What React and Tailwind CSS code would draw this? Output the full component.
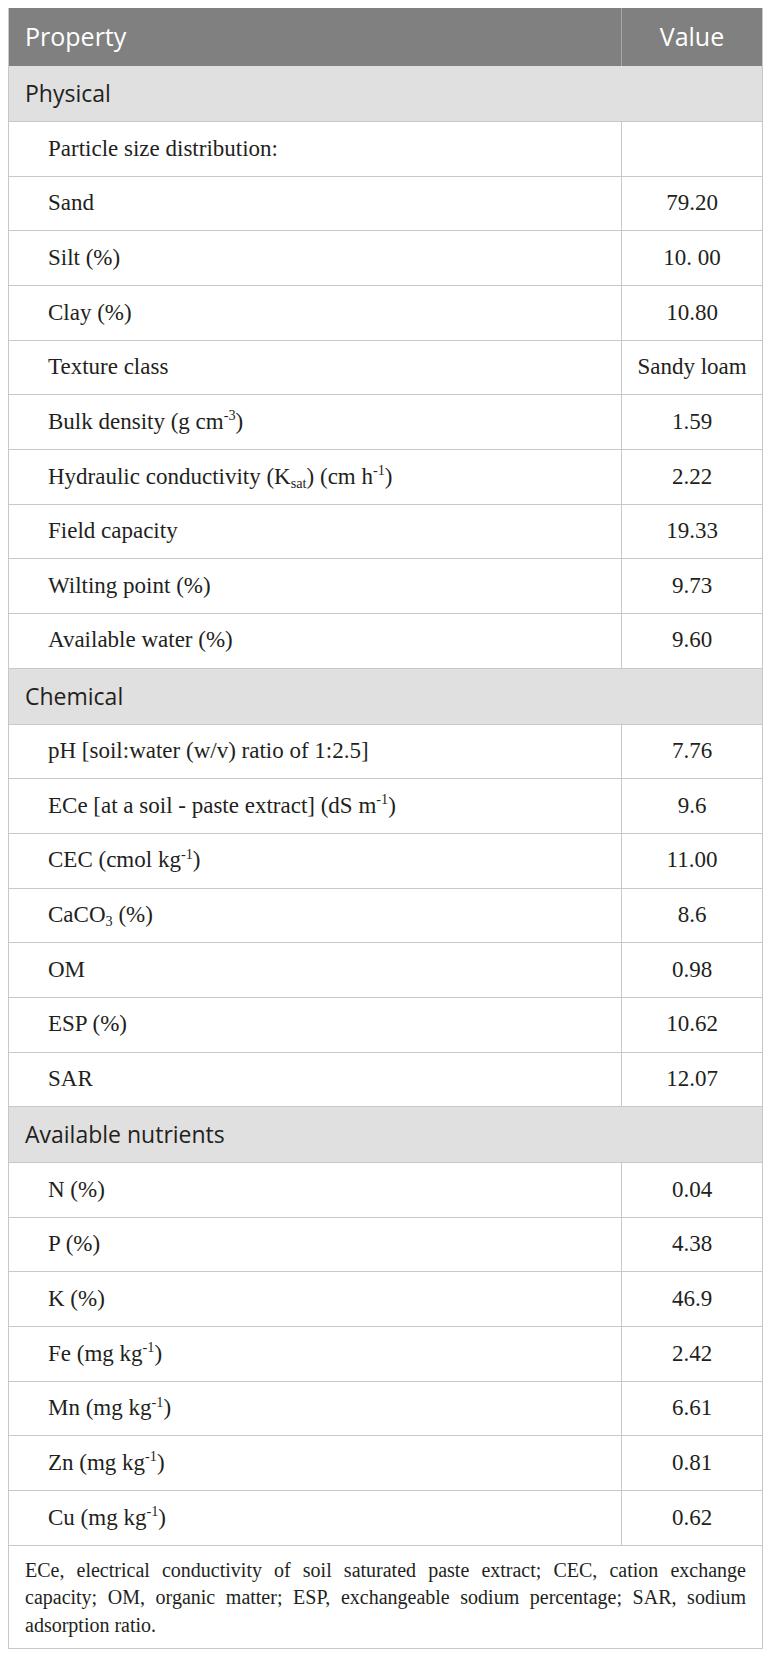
import React from "react";

const serif = { fontFamily: '"Liberation Serif", "Times New Roman", serif' };
const sans = { fontFamily: '"Open Sans", "Noto Sans", sans-serif' };

const Sup = ({ children }) => (
  <sup className="top-[-0.6em] text-[0.62em]">{children}</sup>
);
const Sub = ({ children }) => (
  <sub className="bottom-[-0.3em] text-[0.62em]">{children}</sub>
);

const sections = [
  {
    title: "Physical",
    rows: [
      ["Particle size distribution:", ""],
      ["Sand", "79.20"],
      ["Silt (%)", "10. 00"],
      ["Clay (%)", "10.80"],
      ["Texture class", "Sandy loam"],
      [<>Bulk density (g cm<Sup>-3</Sup>)</>, "1.59"],
      [
        <>
          Hydraulic conductivity (K<Sub>sat</Sub>) (cm h<Sup>-1</Sup>)
        </>,
        "2.22",
      ],
      ["Field capacity", "19.33"],
      ["Wilting point (%)", "9.73"],
      ["Available water (%)", "9.60"],
    ],
  },
  {
    title: "Chemical",
    rows: [
      ["pH [soil:water (w/v) ratio of 1:2.5]", "7.76"],
      [<>ECe [at a soil - paste extract] (dS m<Sup>-1</Sup>)</>, "9.6"],
      [<>CEC (cmol kg<Sup>-1</Sup>)</>, "11.00"],
      [<>CaCO<Sub>3</Sub> (%)</>, "8.6"],
      ["OM", "0.98"],
      ["ESP (%)", "10.62"],
      ["SAR", "12.07"],
    ],
  },
  {
    title: "Available nutrients",
    rows: [
      ["N (%)", "0.04"],
      ["P (%)", "4.38"],
      ["K (%)", "46.9"],
      [<>Fe (mg kg<Sup>-1</Sup>)</>, "2.42"],
      [<>Mn (mg kg<Sup>-1</Sup>)</>, "6.61"],
      [<>Zn (mg kg<Sup>-1</Sup>)</>, "0.81"],
      [<>Cu (mg kg<Sup>-1</Sup>)</>, "0.62"],
    ],
  },
];

function Row({ label, value }) {
  return (
    <div
      className="flex h-[54.67px] border-b border-[#c8c8c8] text-[23px] text-[#231f20]"
      style={serif}
    >
      <div className="flex flex-1 items-center pl-[39px] whitespace-nowrap">
        <span>{label}</span>
      </div>
      <div className="flex w-[141px] items-center justify-center border-l border-[#c8c8c8]">
        {value}
      </div>
    </div>
  );
}

function SectionHead({ title }) {
  return (
    <div
      className="flex h-[56px] items-center border-b border-[#c8c8c8] bg-[#e0e0e0] pl-4 text-[23px] text-[#231f20]"
      style={sans}
    >
      {title}
    </div>
  );
}

export default function App() {
  return (
    <div className="min-h-[1658px] bg-white p-2">
      <div className="w-[755px] border-x border-[#c8c8c8]">
        <div className="flex h-[58px] bg-[#808080] text-[25px] text-white" style={sans}>
          <div className="flex flex-1 items-center pl-4">Property</div>
          <div className="flex w-[141px] items-center justify-center border-l border-[#a8a8a8]">
            Value
          </div>
        </div>
        {sections.map((s) => (
          <div key={s.title}>
            <SectionHead title={s.title} />
            {s.rows.map((r, i) => (
              <Row key={i} label={r[0]} value={r[1]} />
            ))}
          </div>
        ))}
        <div
          className="border-b border-[#c8c8c8] px-4 pt-[11px] pb-[9px] text-justify text-[20px] leading-[27.5px] text-[#231f20]"
          style={serif}
        >
          ECe, electrical conductivity of soil saturated paste extract; CEC,
          cation exchange capacity; OM, organic matter; ESP, exchangeable sodium
          percentage; SAR, sodium adsorption ratio.
        </div>
      </div>
    </div>
  );
}
